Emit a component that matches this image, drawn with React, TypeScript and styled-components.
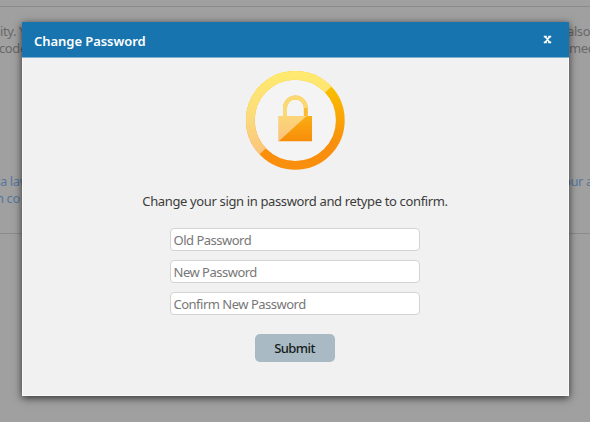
import React from "react";
import styled, { createGlobalStyle } from "styled-components";

const GlobalStyle = createGlobalStyle`
  * { box-sizing: border-box; }
  body {
    margin: 0;
    overflow: hidden;
    background: #a0a0a0;
    font-family: "Noto Sans", "Open Sans", sans-serif;
  }
`;

const Screen = styled.div`
  position: relative;
  width: 590px;
  height: 422px;
  overflow: hidden;
  background: #a0a0a0;
`;

const Backdrop = styled.div`
  display: flex;
  flex-direction: column;
  height: 422px;
`;

const Section = styled.section<{ $height: number; $top: number }>`
  height: ${(p) => p.$height}px;
  padding-top: ${(p) => p.$top}px;
  border-bottom: 1px solid #8b8b8b;
`;

const PageLine = styled.div<{ $link?: boolean; $gap?: number }>`
  display: flex;
  justify-content: space-between;
  height: 17px;
  margin-top: ${(p) => p.$gap ?? 0}px;
  line-height: 17px;
  font-size: 13px;
  letter-spacing: -0.4px;
  white-space: pre;
  color: ${(p) => (p.$link ? "#56779d" : "#686868")};
`;

const Clip = styled.span<{ $width: number; $shift?: number }>`
  width: ${(p) => p.$width}px;
  overflow: hidden;
  text-indent: ${(p) => p.$shift ?? 0}px;
`;

const Dialog = styled.form`
  position: absolute;
  left: 22px;
  top: 22px;
  width: 547px;
  height: 374px;
  display: flex;
  flex-direction: column;
  background: #f1f1f1;
  border-bottom: 1px solid #fafafa;
  box-shadow: 0 2px 8px rgba(0, 0, 0, 0.7);
`;

const Header = styled.header`
  flex: none;
  display: flex;
  justify-content: space-between;
  height: 36px;
  padding: 0 17px 0 12px;
  background: #1774ae;
  border-bottom: 1px solid #7eb0d0;
`;

const Title = styled.h1`
  margin: 0;
  color: #fff;
  font-size: 13px;
  font-weight: 600;
  line-height: 39px;
  letter-spacing: -0.05px;
`;

const Close = styled.button`
  display: flex;
  align-items: flex-start;
  padding: 13px 0 0;
  border: 0;
  background: none;
`;

const Content = styled.div`
  flex: 1;
  display: flex;
  flex-direction: column;
  align-items: center;
  padding: 12px 2px 0 0;
  border: solid #fafafa;
  border-width: 0 1px;
`;

const LockBadge = styled.svg`
  flex: none;
`;

const Message = styled.p`
  margin: 21px 0 0;
  height: 20px;
  line-height: 20px;
  font-size: 13px;
  letter-spacing: -0.36px;
  white-space: nowrap;
  color: #3c3c3c;
  padding-left: 1px;
`;

const Fields = styled.div`
  display: grid;
  gap: 9px;
  margin-top: 17px;
`;

const Field = styled.input`
  width: 250px;
  height: 23px;
  padding: 0 3px;
  border: 1px solid #d3d3d3;
  border-radius: 4px;
  background: #fff;
  font: 13px "Noto Sans", sans-serif;
  letter-spacing: -0.5px;
  outline: 0;
  &::placeholder { color: #777; opacity: 1; }
`;

const Submit = styled.button`
  width: 80px;
  height: 28px;
  margin-top: 19px;
  padding: 0;
  border: 0;
  border-radius: 5px;
  background: #a9bac4;
  color: #171c20;
  font: 500 13px "Noto Sans", sans-serif;
  letter-spacing: -0.6px;
`;

function Lock() {
  return (
    <LockBadge width="100" height="100" viewBox="0 0 100 100" aria-hidden="true">
      <defs>
        <linearGradient id="ring" x1="0" y1="0" x2="0" y2="1">
          <stop offset="0.1" stopColor="#f9c200" />
          <stop offset="0.75" stopColor="#f98f0c" />
        </linearGradient>
        <linearGradient id="pale" x1="0" y1="0" x2="0" y2="1">
          <stop offset="0" stopColor="#ffe96e" />
          <stop offset="0.45" stopColor="#fbdc7c" />
          <stop offset="1" stopColor="#fbbd7c" />
        </linearGradient>
        <linearGradient id="body" x1="0" y1="0" x2="0" y2="1">
          <stop offset="0" stopColor="#f9ad12" />
          <stop offset="1" stopColor="#f88d0a" />
        </linearGradient>
        <linearGradient id="paleBody" x1="0" y1="0" x2="0" y2="1">
          <stop offset="0" stopColor="#fbd678" />
          <stop offset="1" stopColor="#fbc27c" />
        </linearGradient>
        <clipPath id="upper"><path d="M0 0H104L0 98Z" /></clipPath>
      </defs>
      <circle cx="50.3" cy="50.3" r="45" fill="#f4f4f4" stroke="url(#ring)" strokeWidth="8.8" />
      <path d="M33.7 46H67V71.3H33.7Z" fill="url(#body)" />
      <path d="M40 47V38a10.4 10.4 0 0 1 20.8 0V47" fill="none" stroke="#f9b931" strokeWidth="4" />
      <g clipPath="url(#upper)">
        <circle cx="50.3" cy="50.3" r="45" fill="none" stroke="url(#pale)" strokeWidth="8.8" />
      </g>
      <path d="M33.7 46H61.5L33.7 71.3Z" fill="url(#paleBody)" />
      <path d="M40 46V38a10.4 10.4 0 0 1 20.8 0" fill="none" stroke="#fbd972" strokeWidth="4" />
    </LockBadge>
  );
}

export default function App() {
  return (
    <>
      <GlobalStyle />
      <Screen>
        <Backdrop>
          <Section $height={7} $top={0} />
          <Section $height={227} $top={16}>
            <PageLine><Clip $width={26}>ity. Y</Clip><Clip $width={23}>also</Clip></PageLine>
            <PageLine><Clip $width={28} $shift={-1}>code</Clip><Clip $width={22} $shift={1}>med</Clip></PageLine>
            <PageLine $link $gap={116}><Clip $width={28}>a law</Clip><Clip $width={27}>our a</Clip></PageLine>
            <PageLine $link><Clip $width={28} $shift={-4}>n co</Clip></PageLine>
          </Section>
        </Backdrop>
        <Dialog onSubmit={(e) => e.preventDefault()}>
          <Header>
            <Title>Change Password</Title>
            <Close type="button" aria-label="Close">
              <svg width="9" height="9" viewBox="0 0 9 9">
                <path d="M0.8 1.6H3.8M5.2 1.6H8.2M0.8 7.4H3.8M5.2 7.4H8.2M2.3 1.4L6.7 7.6M6.7 1.4L2.3 7.6" stroke="#fff" strokeWidth="1.7" />
              </svg>
            </Close>
          </Header>
          <Content>
            <Lock />
            <Message>Change your sign in password and retype to confirm.</Message>
            <Fields>
              <Field type="password" placeholder="Old Password" />
              <Field type="password" placeholder="New Password" />
              <Field type="password" placeholder="Confirm New Password" />
            </Fields>
            <Submit type="submit">Submit</Submit>
          </Content>
        </Dialog>
      </Screen>
    </>
  );
}
